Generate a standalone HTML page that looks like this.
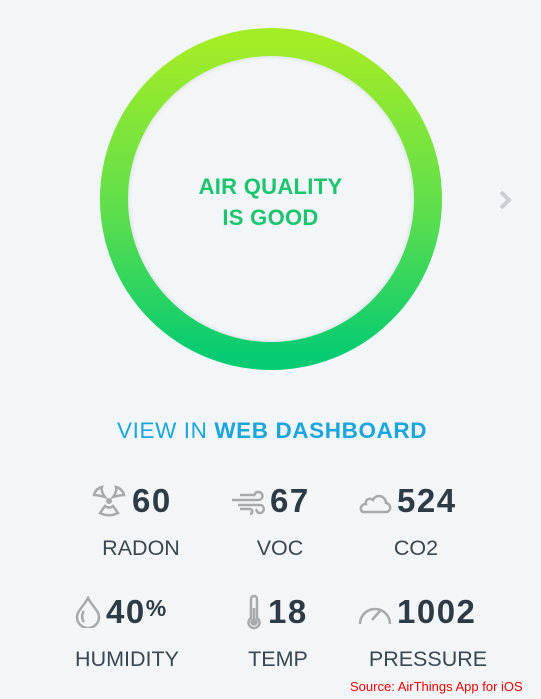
<!DOCTYPE html>
<html><head><meta charset="utf-8"><style>
body{margin:0;width:541px;height:699px;background:#f2f6f9;position:relative;overflow:hidden;font-family:"Liberation Sans",sans-serif}
.a{position:absolute;white-space:nowrap}
.n{font-weight:bold;font-size:33px;letter-spacing:1.5px;color:#2e3b45;top:482px}
.l{font-size:21.5px;color:#3a4650;transform:translateX(-50%);top:536px}
.r2n{top:593px}.r2l{top:647px}
</style></head><body>
<svg class="a" style="left:0;top:0" width="541" height="420">
<defs><linearGradient id="g" x1="0" y1="0" x2="0" y2="1"><stop offset="0" stop-color="#a4ec26"/><stop offset="0.55" stop-color="#5cde4d"/><stop offset="1" stop-color="#06cb72"/></linearGradient>
<filter id="s"><feGaussianBlur stdDeviation="1.5"/></filter></defs>
<circle cx="271" cy="199" r="143" fill="none" stroke="#dde3e6" stroke-width="3" filter="url(#s)"/>
<circle cx="271" cy="199" r="157" fill="none" stroke="url(#g)" stroke-width="28"/>
<path d="M501 192 L509 200 L501 208" fill="none" stroke="#c8ced2" stroke-width="4"/>
</svg>
<div class="a" style="left:0;width:541px;text-align:center;top:171px;font-size:22px;line-height:31px;color:#1cc46e;font-weight:bold;letter-spacing:0.3px">AIR QUALITY<br>IS GOOD</div>
<div class="a" style="left:117px;top:418px;font-size:22.5px;letter-spacing:0.6px;color:#1ba5dd">VIEW IN <b>WEB DASHBOARD</b></div>

<svg class="a" style="left:90px;top:484px" width="38" height="34" fill="none" stroke="#a6aaad" stroke-width="2.5">
<circle cx="19" cy="17" r="3" fill="#a6aaad" stroke="none"/>
<path d="M15 13 C12 9 11 6 12 3 C8 4 5 7 4 11 C8 11 11 12 15 13 Z M23 13 C26 9 27 6 26 3 C30 4 33 7 34 11 C30 11 27 12 23 13 Z M15 22 L10 29 C16 32 22 32 28 29 L23 22 C21 24 17 24 15 22 Z"/></svg>
<div class="a n" style="left:132px">60</div>
<svg class="a" style="left:230px;top:486px" width="38" height="30" fill="none" stroke="#a6aaad" stroke-width="2.5">
<path d="M2 14 H28 C34 14 34 6 28 6 C25 6 24 9 25 10 M10 9 H24 M8 19 H30 C35 19 35 27 30 27 C27 27 26 24 27 23 M10 23 H20 C23 23 23 28 20 28"/></svg>
<div class="a n" style="left:270px">67</div>
<svg class="a" style="left:356px;top:488px" width="38" height="28" fill="none" stroke="#a6aaad" stroke-width="2.5">
<path d="M8 24 H30 C35 24 36 16 30 15 C30 8 20 5 17 12 C13 9 9 12 10 16 C4 16 3 24 8 24 Z"/></svg>
<div class="a n" style="left:397px">524</div>
<div class="a l" style="left:141px">RADON</div>
<div class="a l" style="left:280px">VOC</div>
<div class="a l" style="left:416px">CO2</div>

<svg class="a" style="left:74px;top:596px" width="28" height="32" fill="none" stroke="#a6aaad" stroke-width="2.5">
<path d="M14 2 C10 10 3 15 3 21 A11 11 0 0 0 25 21 C25 15 18 10 14 2 Z M10 15 C7 19 8 24 10 26"/></svg>
<div class="a n r2n" style="left:106px">40<span style="font-size:23px;vertical-align:top;position:relative;top:2px">%</span></div>
<svg class="a" style="left:244px;top:594px" width="20" height="36" fill="none" stroke="#a6aaad" stroke-width="2.5">
<path d="M7 24 V5 A3 3 0 0 1 13 5 V24 A5.5 5.5 0 1 1 7 24 Z"/><circle cx="10" cy="28" r="2.5" fill="#a6aaad"/><path d="M10 27 V14"/></svg>
<div class="a n r2n" style="left:268px">18</div>
<svg class="a" style="left:356px;top:598px" width="38" height="28" fill="none" stroke="#a6aaad" stroke-width="2.5">
<path d="M4 26 A15 15 0 1 1 34 26 M16 22 L24 13"/></svg>
<div class="a n r2n" style="left:397px">1002</div>
<div class="a l r2l" style="left:127px">HUMIDITY</div>
<div class="a l r2l" style="left:278px">TEMP</div>
<div class="a l r2l" style="left:428px">PRESSURE</div>
<div class="a" style="left:350px;top:679px;font-size:13px;color:#f00">Source: AirThings App for iOS</div>
</body></html>
